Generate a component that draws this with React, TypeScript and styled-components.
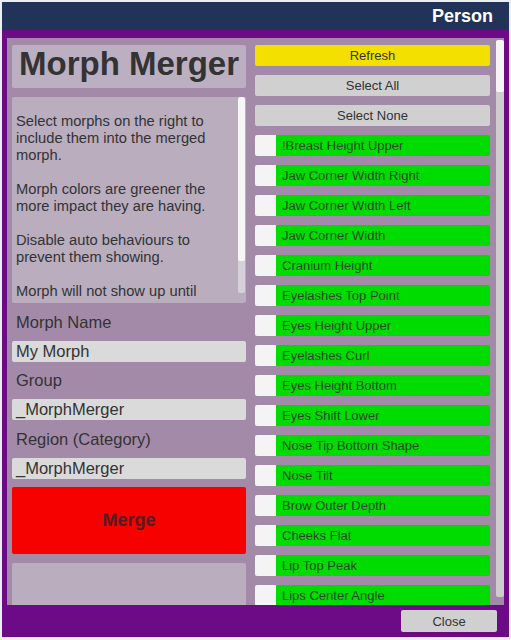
import React from "react";
import styled, { createGlobalStyle } from "styled-components";

const Global = createGlobalStyle`
  html, body { margin: 0; padding: 0; background: #eceef1; }
  body { font-family: "Liberation Sans", Arial, sans-serif; }
  * { box-sizing: border-box; }
`;

const Frame = styled.div`
  width: 507px;
  height: 635px;
  margin: 2px;
  display: flex;
  flex-direction: column;
  background: #6c0b85;
`;

const Header = styled.div`
  height: 28px;
  background: #22335a;
  display: flex;
  align-items: center;
  justify-content: flex-end;
  padding-right: 16px;
  color: #ffffff;
  font-weight: bold;
  font-size: 18px;
`;

const Body = styled.div`
  padding: 8px 5px 0 5px;
`;

const Content = styled.div`
  height: 567px;
  background: #a38aa9;
  display: flex;
  overflow: hidden;
`;

const LeftCol = styled.div`
  width: 234px;
  margin-left: 5px;
  padding-top: 7px;
  display: flex;
  flex-direction: column;
  & > * { flex: none; }
`;

const TitleBox = styled.div`
  height: 43px;
  background: #bbafc1;
  border-radius: 2px;
  display: flex;
  align-items: center;
  justify-content: center;
  padding-bottom: 5px;
  font-size: 33px;
  font-weight: bold;
  color: #333333;
`;

const Desc = styled.div`
  margin-top: 9px;
  height: 206px;
  background: #b9adbe;
  border-radius: 2px;
  position: relative;
  overflow: hidden;
  padding: 16px 17px 0 4px;
  font-size: 14.7px;
  line-height: 17px;
  color: #333333;
`;

const Para = styled.p`
  margin: 0 0 17px 0;
`;

const DescScroll = styled.div`
  position: absolute;
  right: 1px;
  top: 0;
  width: 7px;
  height: 196px;
  background: #d6d0d8;
  border-radius: 2px;
  overflow: hidden;
`;

const DescThumb = styled.div`
  height: 164px;
  background: #f6f6f6;
  border-radius: 2px;
`;

const Label = styled.div<{ $h: number }>`
  height: ${(p) => p.$h}px;
  display: flex;
  align-items: center;
  padding-left: 4px;
  font-size: 16.5px;
  color: #333333;
`;

const Input = styled.div`
  height: 21px;
  background: #dadada;
  border-radius: 2px;
  display: flex;
  align-items: center;
  padding-left: 4px;
  font-size: 16.5px;
  color: #333333;
`;

const MergeButton = styled.div`
  margin-top: 8px;
  height: 67px;
  background: #f60000;
  border-radius: 2px;
  display: flex;
  align-items: center;
  justify-content: center;
  font-size: 18px;
  font-weight: bold;
  color: #561c22;
`;

const Spare = styled.div`
  margin-top: 9px;
  height: 60px;
  background: #b9adbe;
  border-radius: 2px;
`;

const RightCol = styled.div`
  width: 235px;
  margin-left: 9px;
  padding-top: 7px;
  display: flex;
  flex-direction: column;
  gap: 9px;
`;

const Button = styled.div<{ $bg: string }>`
  flex: none;
  height: 21px;
  background: ${(p) => p.$bg};
  border-radius: 2px;
  display: flex;
  align-items: center;
  justify-content: center;
  font-size: 13px;
  color: #333333;
`;

const Row = styled.div`
  flex: none;
  height: 21px;
  display: flex;
  border-radius: 2px;
  overflow: hidden;
`;

const Check = styled.div`
  width: 21px;
  background: #f4f4f4;
`;

const RowLabel = styled.div`
  flex: 1;
  background: #00dc00;
  display: flex;
  align-items: center;
  padding-left: 6px;
  font-size: 13px;
  color: #2c452c;
`;

const ListScroll = styled.div`
  width: 8px;
  margin-left: 6px;
  margin-top: 2px;
  height: 557px;
  background: #cdcdcd;
  border-radius: 2px;
  overflow: hidden;
`;

const ListThumb = styled.div`
  height: 52px;
  background: #f5f5f5;
  border-radius: 2px;
`;

const Footer = styled.div`
  height: 32px;
  display: flex;
  justify-content: flex-end;
  align-items: flex-start;
  padding: 5px 12px 0 0;
`;

const CloseButton = styled.div`
  width: 96px;
  height: 22px;
  background: #d0d0d0;
  border-radius: 2px;
  display: flex;
  align-items: center;
  justify-content: center;
  font-size: 13px;
  color: #333333;
`;

const morphs = [
  "!Breast Height Upper",
  "Jaw Corner Width Right",
  "Jaw Corner Width Left",
  "Jaw Corner Width",
  "Cranium Height",
  "Eyelashes Top Point",
  "Eyes Height Upper",
  "Eyelashes Curl",
  "Eyes Height Bottom",
  "Eyes Shift Lower",
  "Nose Tip Bottom Shape",
  "Nose Tilt",
  "Brow Outer Depth",
  "Cheeks Flat",
  "Lip Top Peak",
  "Lips Center Angle",
];

export default function App() {
  return (
    <>
      <Global />
      <Frame>
        <Header>Person</Header>
        <Body>
          <Content>
            <LeftCol>
              <TitleBox>Morph Merger</TitleBox>
              <Desc>
                <Para>Select morphs on the right to include them into the merged morph.</Para>
                <Para>Morph colors are greener the more impact they are having.</Para>
                <Para>Disable auto behaviours to prevent them showing.</Para>
                <Para>Morph will not show up until</Para>
                <DescScroll>
                  <DescThumb />
                </DescScroll>
              </Desc>
              <Label $h={38}>Morph Name</Label>
              <Input>My Morph</Input>
              <Label $h={37}>Group</Label>
              <Input>_MorphMerger</Input>
              <Label $h={38}>Region (Category)</Label>
              <Input>_MorphMerger</Input>
              <MergeButton>Merge</MergeButton>
              <Spare />
            </LeftCol>
            <RightCol>
              <Button $bg="#f4e000">Refresh</Button>
              <Button $bg="#d0d0d0">Select All</Button>
              <Button $bg="#d0d0d0">Select None</Button>
              {morphs.map((m) => (
                <Row key={m}>
                  <Check />
                  <RowLabel>{m}</RowLabel>
                </Row>
              ))}
            </RightCol>
            <ListScroll>
              <ListThumb />
            </ListScroll>
          </Content>
        </Body>
        <Footer>
          <CloseButton>Close</CloseButton>
        </Footer>
      </Frame>
    </>
  );
}
